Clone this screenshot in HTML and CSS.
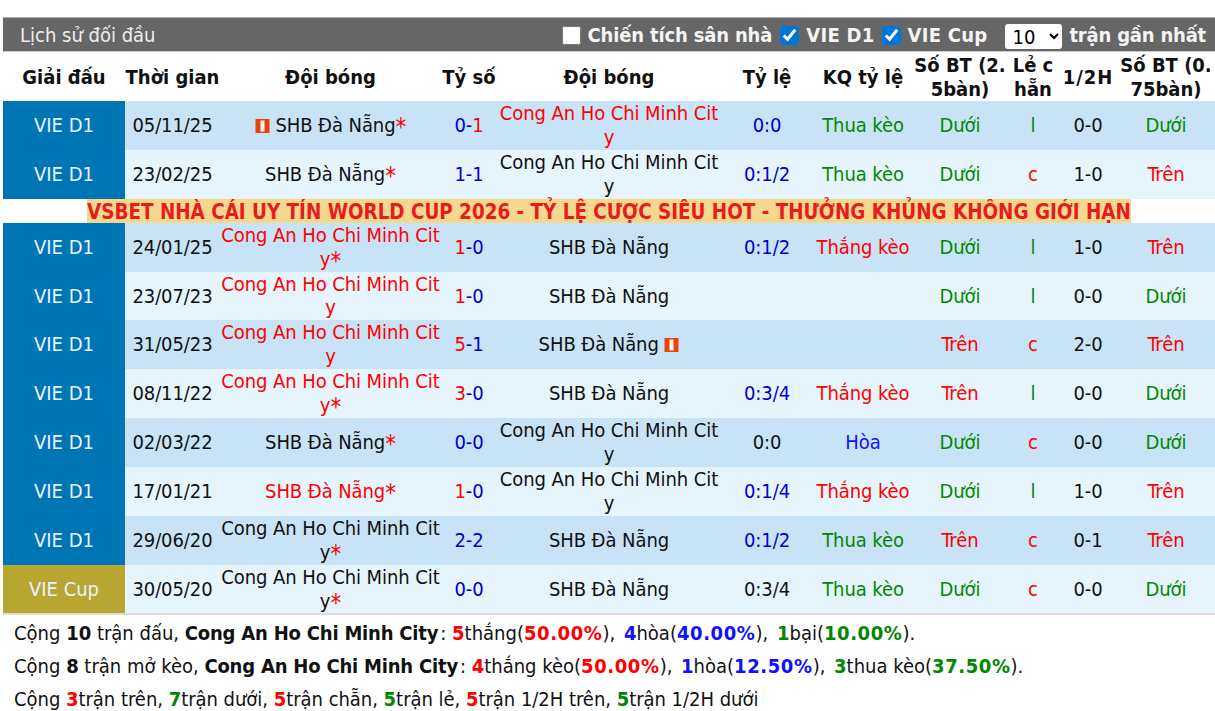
FILE: index.html
```html
<!DOCTYPE html>
<html lang="vi">
<head>
<meta charset="utf-8">
<title>Lịch sử đối đầu</title>
<link rel="stylesheet" href="styles.css">
</head>
<body>
<div class="panel">
  <div class="bar">
    <span class="bar-title">Lịch sử đối đầu</span>
    <div class="bar-filters">
      <label class="chk home"><input type="checkbox">Chiến tích sân nhà</label>
      <label class="chk d1"><input type="checkbox" checked>VIE D1</label>
      <label class="chk cupf"><input type="checkbox" checked>VIE Cup</label>
      <select class="sel"><option>10</option></select>
      <span class="recent">trận gần nhất</span>
    </div>
  </div>
  <table class="grid">
    <colgroup>
      <col class="c1"><col class="c2"><col class="c3"><col class="c4"><col class="c5"><col class="c6"><col class="c7"><col class="c8"><col class="c9"><col class="c10"><col class="c11">
    </colgroup>
    <thead>
      <tr><th>Giải đấu</th><th>Thời gian</th><th>Đội bóng</th><th>Tỷ số</th><th>Đội bóng</th><th>Tỷ lệ</th><th>KQ tỷ lệ</th><th>Số BT (2.5bàn)</th><th>Lẻ c hẵn</th><th class="half">1/2H</th><th>Số BT (0.75bàn)</th></tr>
    </thead>
    <tbody>
      <tr class="a"><td class="lg">VIE D1</td><td>05/11/25</td><td><svg class="flag" viewBox="0 0 14 14"><rect width="14" height="14" fill="#e8430c"/><rect x="5" y="1.5" width="4" height="11" fill="#fff6ea"/></svg> SHB Đà Nẵng<span class="s r">*</span></td><td><i class="b">0-</i><i class="r">1</i></td><td class="r">Cong An Ho Chi Minh City</td><td class="b">0:0</td><td class="g">Thua kèo</td><td class="g">Dưới</td><td class="g">l</td><td>0-0</td><td class="g">Dưới</td></tr>
      <tr class="z"><td class="lg">VIE D1</td><td>23/02/25</td><td>SHB Đà Nẵng<span class="s r">*</span></td><td class="b">1-1</td><td>Cong An Ho Chi Minh City</td><td class="b">0:1/2</td><td class="g">Thua kèo</td><td class="g">Dưới</td><td class="r">c</td><td>1-0</td><td class="r">Trên</td></tr>
      <tr class="ad"><td colspan="11"><span>VSBET NHÀ CÁI UY TÍN WORLD CUP 2026 - TỶ LỆ CƯỢC SIÊU HOT - THƯỞNG KHỦNG KHÔNG GIỚI HẠN</span></td></tr>
      <tr class="a"><td class="lg">VIE D1</td><td>24/01/25</td><td class="r">Cong An Ho Chi Minh City<span class="s">*</span></td><td><i class="r">1</i><i class="b">-0</i></td><td>SHB Đà Nẵng</td><td class="b">0:1/2</td><td class="r">Thắng kèo</td><td class="g">Dưới</td><td class="g">l</td><td>1-0</td><td class="r">Trên</td></tr>
      <tr class="z"><td class="lg">VIE D1</td><td>23/07/23</td><td class="r">Cong An Ho Chi Minh City</td><td><i class="r">1</i><i class="b">-0</i></td><td>SHB Đà Nẵng</td><td></td><td></td><td class="g">Dưới</td><td class="g">l</td><td>0-0</td><td class="g">Dưới</td></tr>
      <tr class="a"><td class="lg">VIE D1</td><td>31/05/23</td><td class="r">Cong An Ho Chi Minh City</td><td><i class="r">5</i><i class="b">-1</i></td><td>SHB Đà Nẵng <svg class="flag" viewBox="0 0 14 14"><rect width="14" height="14" fill="#e8430c"/><rect x="5" y="1.5" width="4" height="11" fill="#fff6ea"/></svg></td><td></td><td></td><td class="r">Trên</td><td class="r">c</td><td>2-0</td><td class="r">Trên</td></tr>
      <tr class="z"><td class="lg">VIE D1</td><td>08/11/22</td><td class="r">Cong An Ho Chi Minh City<span class="s">*</span></td><td><i class="r">3</i><i class="b">-0</i></td><td>SHB Đà Nẵng</td><td class="b">0:3/4</td><td class="r">Thắng kèo</td><td class="r">Trên</td><td class="g">l</td><td>0-0</td><td class="g">Dưới</td></tr>
      <tr class="a"><td class="lg">VIE D1</td><td>02/03/22</td><td>SHB Đà Nẵng<span class="s r">*</span></td><td class="b">0-0</td><td>Cong An Ho Chi Minh City</td><td>0:0</td><td class="bb">Hòa</td><td class="g">Dưới</td><td class="r">c</td><td>0-0</td><td class="g">Dưới</td></tr>
      <tr class="z"><td class="lg">VIE D1</td><td>17/01/21</td><td class="r">SHB Đà Nẵng<span class="s">*</span></td><td><i class="r">1</i><i class="b">-0</i></td><td>Cong An Ho Chi Minh City</td><td class="b">0:1/4</td><td class="r">Thắng kèo</td><td class="g">Dưới</td><td class="g">l</td><td>1-0</td><td class="r">Trên</td></tr>
      <tr class="a"><td class="lg">VIE D1</td><td>29/06/20</td><td>Cong An Ho Chi Minh City<span class="s r">*</span></td><td class="b">2-2</td><td>SHB Đà Nẵng</td><td class="b">0:1/2</td><td class="g">Thua kèo</td><td class="r">Trên</td><td class="r">c</td><td>0-1</td><td class="r">Trên</td></tr>
      <tr class="z last"><td class="lg cup">VIE Cup</td><td>30/05/20</td><td>Cong An Ho Chi Minh City<span class="s r">*</span></td><td class="b">0-0</td><td>SHB Đà Nẵng</td><td>0:3/4</td><td class="g">Thua kèo</td><td class="g">Dưới</td><td class="r">c</td><td>0-0</td><td class="g">Dưới</td></tr>
    </tbody>
  </table>
  <div class="stats">
    <p>Cộng <b>10</b> trận đấu, <b class="name">Cong An Ho Chi Minh City</b>: <b class="r">5</b>thắng(<b class="r pct">50.00%</b>), <b class="bb">4</b>hòa(<b class="bb pct">40.00%</b>), <b class="g">1</b>bại(<b class="g pct">10.00%</b>).</p>
    <p>Cộng <b>8</b> trận mở kèo, <b class="name">Cong An Ho Chi Minh City</b>: <b class="r">4</b>thắng kèo(<b class="r pct">50.00%</b>), <b class="bb">1</b>hòa(<b class="bb pct">12.50%</b>), <b class="g">3</b>thua kèo(<b class="g pct">37.50%</b>).</p>
    <p class="tight">Cộng <b class="r">3</b>trận trên, <b class="g">7</b>trận dưới, <b class="r">5</b>trận chẵn, <b class="g">5</b>trận lẻ, <b class="r">5</b>trận 1/2H trên, <b class="g">5</b>trận 1/2H dưới</p>
  </div>
</div>
</body>
</html>
```
FILE: styles.css
```css
* { box-sizing: border-box; }
html, body { margin: 0; background: #fff; height: 711px; overflow: hidden; }
body { padding: 17px 0 0 3px; font-family: "DejaVu Sans Condensed", "DejaVu Sans", sans-serif; font-size: 20px; color: #111; }
.panel { width: 1212px; }
.bar { height: 35px; background: #666; border-top: 1px solid #aaa; border-bottom: 1px solid #ccc; color: #fff; display: flex; align-items: center; justify-content: space-between; padding: 1px 9px 0 17px; }
.bar-title { color: #eee; }
.bar-filters { display: flex; align-items: center; font-weight: bold; color: #f4f4f4; }
.chk { display: flex; align-items: center; margin-right: 7px; }
.chk input { width: 19px; height: 19px; margin: 0 7px 0 0; accent-color: #0075d8; }
.home { letter-spacing: -0.17px; margin-right: 8px; }
.d1 { letter-spacing: 0.3px; }
.cupf { letter-spacing: 0.25px; }
.recent { letter-spacing: -0.2px; }
.sel { width: 57px; height: 25px; margin: 3px 7px 0 11px; padding-left: 3px; font-size: 20px; font-family: inherit; background: #fff; border: 0; border-radius: 3px; }
.grid { width: 1212px; table-layout: fixed; border-collapse: collapse; }
.c1 { width: 122px; } .c2 { width: 95px; } .c3 { width: 221px; } .c4 { width: 56px; } .c5 { width: 224px; } .c6 { width: 92px; } .c7 { width: 100px; } .c8 { width: 94px; } .c9 { width: 52px; } .c10 { width: 58px; } .c11 { width: 98px; }
th { height: 49px; padding: 0; line-height: 24px; word-break: break-all; color: #111; text-align: center; }
th.half { letter-spacing: 0.9px; }
td { height: 48.85px; padding: 1px 0 0; text-align: center; line-height: 23.9px; letter-spacing: -0.08px; word-break: break-all; }
.a td { background: #c8e3f6; }
.z td { background: #e6f4fc; }
td.lg { background: #0075b5; color: #e8f4fc; letter-spacing: 0; }
td.cup { background: #b8a632; }
.ad td { background: #fff; height: 24px; padding: 0; line-height: 24px; font-size: 20.4px; color: #e81c1c; font-weight: bold; letter-spacing: 0; word-break: normal; white-space: nowrap; }
.ad span { background: #f5d78e; display: inline-block; height: 24px; line-height: 26px; vertical-align: top; }
.last td { border-bottom: 2px solid #ddd; }
i { font-style: normal; }
.r { color: #f00; }
.b { color: #00c; }
.bb { color: #11f; }
.g { color: #080; }
.s { font-size: 24px; line-height: 0; vertical-align: -3px; }
.flag { width: 15px; height: 14px; vertical-align: -1px; }
.stats { padding: 6px 0 0 11px; display: flex; flex-direction: column; gap: 9px; }
.stats p { margin: 0; line-height: 24px; white-space: nowrap; }
.stats .name { letter-spacing: -0.2px; margin-right: 2px; }
.stats .pct { letter-spacing: 0.6px; }
.stats .pct + b { margin-left: 3px; }
.stats .tight { letter-spacing: -0.03px; }
```
